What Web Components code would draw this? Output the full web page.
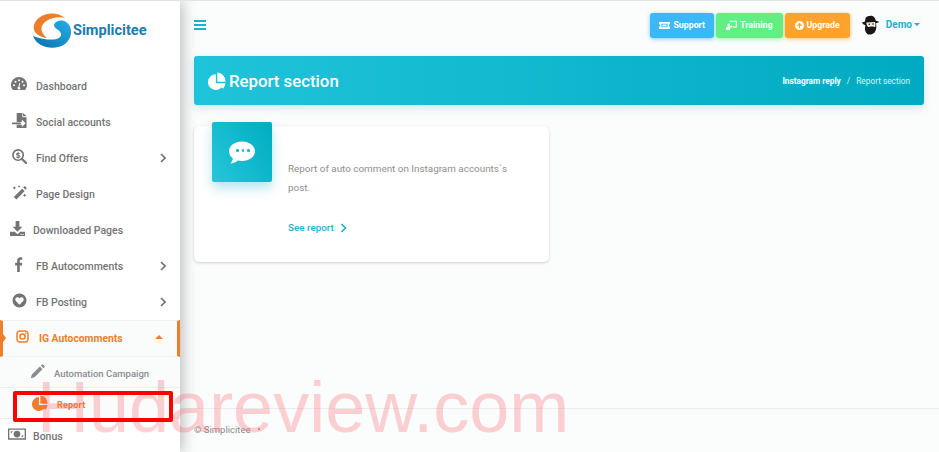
<!DOCTYPE html>
<html lang="en">
<head>
<meta charset="utf-8">
<title>Report section</title>
<style>
  html, body { margin: 0; height: 100%; }
  body {
    width: 939px;
    height: 452px;
    overflow: hidden;
    position: relative;
    display: flex;
    font-family: Roboto, "Liberation Sans", sans-serif;
    background: #fbfcfc;
    border-top: 1px solid #e2e2e2;
    box-sizing: border-box;
  }
</style>
</head>
<body>
<app-sidebar>
  <nav-item icon="gauge" size="16" style="--pad:11px;--gap:9px">Dashboard</nav-item>
  <nav-item icon="signin" size="15" style="--pad:12px;--gap:9px">Social accounts</nav-item>
  <nav-item icon="search" size="15" arrow="right" style="--pad:12px;--gap:9px">Find Offers</nav-item>
  <nav-item icon="wand" size="15" style="--pad:12px;--gap:9px">Page Design</nav-item>
  <nav-item icon="download" size="15" style="--pad:10px;--gap:8px">Downloaded Pages</nav-item>
  <nav-item icon="facebook" size="15" arrow="right" style="--pad:12px;--gap:9px">FB Autocomments</nav-item>
  <nav-item icon="heart" size="15" arrow="right" style="--pad:12px;--gap:9px">FB Posting</nav-item>
  <nav-item icon="instagram" size="13" arrow="up" active style="--pad:13px;--gap:10px">IG Autocomments</nav-item>
  <nav-item icon="pencil" size="15" sub style="--pad:30px;--gap:9px">Automation Campaign</nav-item>
  <nav-item icon="pie" size="16" sub current style="--pad:32px;--gap:9px">Report</nav-item>
  <nav-item icon="money" size="18" bottom style="--pad:8px;--gap:7px">Bonus</nav-item>
</app-sidebar>
<main-panel>
  <top-bar slot="top"></top-bar>
  <page-header slot="top" crumb="Instagram reply" current="Report section">Report section</page-header>
  <report-card link="See report">Report of auto comment on Instagram accounts`s post.</report-card>
  <page-footer slot="foot">© Simplicitee</page-footer>
</main-panel>
<mark-box></mark-box>
<water-mark>Hudareview.com</water-mark>

<script>
const ICONS = {
  gauge: '<path fill="currentColor" d="M8 1a8 8 0 0 0-8 8c0 1.700.5 3.300 1.500 4.600.2.300.5.400.8.400h11.400c.3 0 .6-.1.8-.4A8 8 0 0 0 16 9a8 8 0 0 0-8-8zm0 2.200a1 1 0 1 1 0 2 1 1 0 0 1 0-2zM3 10.300a1 1 0 1 1 0-2 1 1 0 0 1 0 2zm1.500-3.500a1 1 0 1 1 0-2 1 1 0 0 1 0 2zm5 5.700a1.600 1.600 0 0 1-3 0c-.2-.7.2-1.400.9-1.600l1-4 .9.200-.9 4c.5.200.9.700 1.100 1.400zM11.500 6.800a1 1 0 1 1 0-2 1 1 0 0 1 0 2zm1.500 3.500a1 1 0 1 1 0-2 1 1 0 0 1 0 2z"/>',
  signin: '<path fill="currentColor" d="M5 0h6v4.500h4.500V16H5v-3.500h5.500V15l4-4-4-4v2.500H5zM11.800 0 15.500 3.500h-3.700zM0 10h9.500v2H0z"/>',
  search: '<path fill="none" stroke="currentColor" stroke-width="1.800" d="M6.500 1a5.500 5.500 0 1 0 0 11 5.500 5.500 0 0 0 0-11z"/><path fill="none" stroke="currentColor" stroke-width="2.400" stroke-linecap="round" d="m10.700 10.700 4.300 4.300"/><path fill="none" stroke="currentColor" stroke-width="1.100" d="M8.300 5a2 1.300 0 0 0-3.600.500c0 1.700 3.800.8 3.800 2.500A2 1.300 0 0 1 4.600 8.300M6.500 3v7"/>',
  wand: '<path fill="currentColor" d="m10.800 4 2.700 2.500-8.800 9-2.800-2.700zM12 2.700l1-1a1 1 0 0 1 1.300 0l1 1a1 1 0 0 1 0 1.400l-1 1zM2.500 1l.6 1.400 1.400.6-1.400.6-.6 1.400-.6-1.400L.5 3l1.400-.6zM7.500 0l.5 1 1 .5-1 .5-.5 1L7 2l-1-.5 1-.5zM13.500 9l.6 1.400 1.400.6-1.400.6-.6 1.400-.6-1.400-1.400-.6 1.400-.6z"/>',
  download: '<path fill="currentColor" d="M6 0h4v6h3.200L8 11.500 2.800 6H6zM0 11.500h5L8 14l3-2.500h5V16H0zm12.300 2.200a.7.7 0 1 0 0 1.100.7.7 0 0 0 0-1.100zm2 0a.7.7 0 1 0 0 1.100.7.7 0 0 0 0-1.100z"/>',
  facebook: '<path fill="currentColor" d="M5.500 16V9H3.300V6h2.200V4c0-2.400 1.300-3.700 3.400-3.700 1 0 1.700.1 2 .1V3H9.600C8.500 3 8.300 3.600 8.300 4.400V6h2.600l-.4 3H8.300v7z"/>',
  heart: '<path fill="currentColor" fill-rule="evenodd" d="M8 .5a7.500 7.500 0 1 0 0 15 7.500 7.500 0 0 0 0-15zM8 12.500 4.100 8.500C2.800 7 3.500 4.600 5.500 4.500c1-.1 1.900.4 2.500 1.300.6-.9 1.500-1.400 2.500-1.300 2 .1 2.700 2.500 1.400 4z"/>',
  instagram: '<rect x="1.200" y="1.200" width="13.600" height="13.600" rx="3.600" fill="none" stroke="currentColor" stroke-width="1.800"/><circle cx="8" cy="8" r="3.200" fill="none" stroke="currentColor" stroke-width="1.800"/><circle cx="12" cy="4" r=".9" fill="currentColor"/>',
  pencil: '<path fill="currentColor" d="M10.500 2.700 13.300 5.500 4.800 14 .8 15.200 2 11.200zM11.500 1.700l1.100-1a1.200 1.200 0 0 1 1.600 0l1.100 1.100a1.200 1.200 0 0 1 0 1.600l-1 1.100z"/>',
  pie: '<path fill="currentColor" d="M7 2a7 7 0 1 0 6.900 8H7zM8.300.5v8.200h7.200A7.600 7.600 0 0 0 8.300.5zM8.500 10l4.800 4.800A7 7 0 0 0 15.500 10z"/>',
  money: '<path fill="currentColor" fill-rule="evenodd" d="M0 3h16v10H0zm1.200 1.200v7.600h13.600V4.200zM8 5a3 3 0 1 1 0 6 3 3 0 0 1 0-6zM2.500 5.500h2l-2 2zm9 5h2v-2z"/>',
  chat: '<path fill="currentColor" d="M8 1.500c4.400 0 8 2.600 8 6s-3.600 6-8 6c-.9 0-1.800-.1-2.600-.3C4.300 14.200 2.700 15 .8 15c.7-.7 1.500-1.900 1.600-3C.9 10.800 0 9.200 0 7.500c0-3.400 3.600-6 8-6z"/>',
  ticket: '<path fill="currentColor" fill-rule="evenodd" d="M0 3h16v3.200a1.800 1.800 0 0 0 0 3.600V13H0V9.800a1.800 1.800 0 0 0 0-3.600zm3.500 2.500v5h9v-5z"/><rect x="5" y="6.700" width="6" height="2.600" fill="currentColor"/>',
  teach: '<path fill="none" stroke="currentColor" stroke-width="1.500" d="M6 3V1.800h9v8.400H9.500"/><circle cx="4" cy="7" r="2" fill="currentColor"/><path fill="currentColor" d="M0 14.500v-2c0-1.700 1.400-3 3-3h2.500L8.500 8l1 1-3.500 2.500v3z"/>',
  up: '<path fill="currentColor" fill-rule="evenodd" d="M8 0a8 8 0 1 0 0 16A8 8 0 0 0 8 0zm0 3 4.500 5-1.400 1.300-2-2.100V13H6.900V7.200l-2 2.100L3.500 8z"/>'
};

function svg(name, size) {
  return `<svg width="${size}" height="${size}" viewBox="0 0 16 16" aria-hidden="true">${ICONS[name]}</svg>`;
}

class AppSidebar extends HTMLElement {
  constructor() {
    super();
    this.attachShadow({ mode: "open" });
    this.shadowRoot.innerHTML = `
      <style>
        :host {
          display: block;
          flex: 0 0 180px;
          width: 180px;
          background: #fff;
          box-shadow: 2px 0 14px rgba(0, 0, 0, 0.28);
          position: relative;
          z-index: 2;
          overflow: hidden;
        }
        .brand {
          height: 67px;
          box-sizing: border-box;
          display: flex;
          align-items: center;
          padding: 0 0 8px 33px;
          color: #1a7dab;
          font-size: 14.600px;
          font-weight: 700;
        }
        .brand span { position: relative; top: -1px; margin-left: -1px; }
        svg { display: block; }
      </style>
      <div class="brand">
        <svg width="41" height="40" viewBox="33 10 41 40" aria-hidden="true">
          <defs>
            <linearGradient id="b" x1="0" y1="1" x2="1" y2="0">
              <stop offset="0" stop-color="#0b6fa8"/><stop offset="1" stop-color="#27aee6"/>
            </linearGradient>
          </defs>
          <path fill="#ec7d2a" d="M65 17C55 9 38 12 34 24c-2 8 6 12 13 13-5-4-8-10-3-15 5-5 14-7 21-5z"/>
          <path fill="url(#b)" d="M33 35c4 12 22 15 32 8 8-6 8-18 1-22-4-3-11-1-12 3 0 4 6 4 7 9 1 6-11 8-28 2z"/>
        </svg>
        <span>Simplicitee</span>
      </div>
      <slot></slot>
    `;
  }
}

class NavItem extends HTMLElement {
  constructor() {
    super();
    this.attachShadow({ mode: "open" });
  }

  connectedCallback() {
    const arrow = this.getAttribute("arrow");
    let arrowMark = "";
    if (arrow === "right") {
      arrowMark = `<svg class="arrow" width="6" height="10" viewBox="0 0 6 10"><path d="m1 1 4 4-4 4" fill="none" stroke="#6f6f6f" stroke-width="1.600"/></svg>`;
    } else if (arrow === "up") {
      arrowMark = `<span class="caret"></span>`;
    }
    this.shadowRoot.innerHTML = `
      <style>
        :host {
          display: flex;
          align-items: center;
          height: 36px;
          box-sizing: border-box;
          padding-left: var(--pad, 12px);
          padding-right: 14px;
          gap: var(--gap, 7px);
          color: #747475;
          font-size: 10.500px;
          font-weight: 500;
          position: relative;
        }
        :host([active]) {
          height: 37px;
          color: #ee7e2c;
          background: #fafbfb;
          border-left: 3px solid #ee7e2c;
          border-right: 3px solid #ee7e2c;
          border-top: 1px solid #f0f2f2;
          border-bottom: 1px solid #f0f2f2;
          font-weight: 700;
          font-size: 10.300px;
        }
        :host([active])::before {
          content: "";
          position: absolute;
          left: 0;
          top: 13px;
          border-left: 3px solid #ee7e2c;
          border-top: 4px solid transparent;
          border-bottom: 4px solid transparent;
        }
        :host([sub]) {
          height: 31px;
          padding-top: 3px;
          background: #fafbfb;
          font-size: 9.500px;
          border-bottom: 1px solid #eef0f0;
          color: #8b8d90;
        }
        :host([current]) {
          color: #ee7e2c;
          font-weight: 700;
          font-size: 9px;
          letter-spacing: 0.2px;
        }
        :host([bottom]) { height: 34px; }
        .icon { display: flex; flex: none; position: relative; top: -2px; }
        .label { flex: 1; white-space: nowrap; }
        .arrow { flex: none; }
        .caret {
          border-left: 4px solid transparent;
          border-right: 4px solid transparent;
          border-bottom: 4px solid currentColor;
          margin-top: -4px;
        }
      </style>
      <span class="icon">${svg(this.getAttribute("icon"), this.getAttribute("size") || 15)}</span>
      <span class="label"><slot></slot></span>
      ${arrowMark}
    `;
  }
}

class MainPanel extends HTMLElement {
  constructor() {
    super();
    this.attachShadow({ mode: "open" });
    this.shadowRoot.innerHTML = `
      <style>
        :host {
          display: flex;
          flex-direction: column;
          flex: 1;
          min-width: 0;
          height: 451px;
        }
        .content { flex: 1; padding: 21px 14px 0; }
        .foot { flex: none; }
      </style>
      <slot name="top"></slot>
      <div class="content"><slot></slot></div>
      <div class="foot"><slot name="foot"></slot></div>
    `;
  }
}

class TopBar extends HTMLElement {
  constructor() {
    super();
    this.attachShadow({ mode: "open" });
    this.shadowRoot.innerHTML = `
      <style>
        :host {
          display: flex;
          align-items: center;
          height: 48px;
          padding: 0 19px 0 14px;
          margin-bottom: 7px;
        }
        .burger { width: 12px; display: grid; gap: 2px; color: #1cb1c9; }
        .burger i { display: block; height: 2px; background: currentColor; }
        .tools { margin-left: auto; display: flex; align-items: center; gap: 2px; }
        .user {
          display: flex; align-items: center; margin-left: 10px;
          color: #1eb0c8; font-size: 10px; font-weight: 700; gap: 6px;
        }
        .user span { position: relative; top: -1px; }
        .user i {
          border-left: 3px solid transparent;
          border-right: 3px solid transparent;
          border-top: 3px solid currentColor;
          margin: -2px 0 0 -4px;
        }
      </style>
      <div class="burger"><i></i><i></i><i></i></div>
      <div class="tools">
        <tool-button icon="ticket" size="11" color="#3ab8f8" style="--left:9px;--right:9px">Support</tool-button>
        <tool-button icon="teach" size="11" color="#62ee82" style="--left:10px;--right:10px">Training</tool-button>
        <tool-button icon="up" size="9" color="#ffa32c" style="--left:10px;--right:10px">Upgrade</tool-button>
        <div class="user">
          <svg width="18" height="21" viewBox="0 0 18 21" aria-hidden="true">
            <path fill="#171717" d="M3.500 3C5 .8 9 .2 11 1.200c1.500.8 2.300 2.300 2.700 4.300L17.500 7 14 8.300c.5 3 .8 6.500-1.500 9.200-1.800 2-5.500 2.800-7.500 1.200C2.800 17 2.500 13 3.500 10.500L1 9l-1-1.500 3-1z"/>
            <path fill="#f3ead9" d="M4.300 7.600 13 6.900c.6 1.200.7 3 .4 4.500-.8.800-1.700.5-2.300.2-.8-.3-1.600-.2-2.200 0-.9.400-1.800.6-2.700.3-1-.5-1.700-2.300-1.900-4.300z"/>
            <circle cx="7.300" cy="9.200" r=".8" fill="#171717"/><circle cx="11" cy="9" r=".8" fill="#171717"/>
          </svg>
          <span>Demo</span><i></i>
        </div>
      </div>
    `;
  }
}

class ToolButton extends HTMLElement {
  constructor() {
    super();
    this.attachShadow({ mode: "open" });
  }

  connectedCallback() {
    const color = this.getAttribute("color");
    this.shadowRoot.innerHTML = `
      <style>
        :host {
          display: flex;
          align-items: center;
          gap: 3px;
          height: 25px;
          padding: 0 var(--right, 10px) 0 var(--left, 9px);
          box-sizing: border-box;
          border-radius: 3px;
          background: ${color};
          box-shadow: 0 1px 4px ${color}aa;
          color: #fff;
          font-size: 8.800px;
          font-weight: 700;
          white-space: nowrap;
        }
        svg { display: block; }
      </style>
      ${svg(this.getAttribute("icon"), this.getAttribute("size"))}<slot></slot>
    `;
  }
}

class PageHeader extends HTMLElement {
  constructor() {
    super();
    this.attachShadow({ mode: "open" });
  }

  connectedCallback() {
    this.shadowRoot.innerHTML = `
      <style>
        :host {
          display: flex;
          align-items: center;
          justify-content: space-between;
          height: 49px;
          margin: 0 15px 0 14px;
          padding: 0 14px;
          border-radius: 3px;
          background: linear-gradient(90deg, #20c4da, #00aac1);
          box-shadow: 0 3px 8px rgba(0, 172, 193, 0.2);
          color: #fff;
        }
        h1 {
          margin: 0;
          display: flex;
          align-items: center;
          gap: 3px;
          font-size: 16.800px;
          font-weight: 500;
        }
        ol {
          display: flex;
          gap: 6px;
          list-style: none;
          margin: 0;
          padding: 0;
          font-size: 8.300px;
          color: #dff5f8;
        }
        ol b { font-weight: 700; color: #fff; }
      </style>
      <h1>${svg("pie", 18)}<slot></slot></h1>
      <ol><li><b>${this.getAttribute("crumb")}</b></li><li>/</li><li>${this.getAttribute("current")}</li></ol>
    `;
  }
}

class ReportCard extends HTMLElement {
  constructor() {
    super();
    this.attachShadow({ mode: "open" });
  }

  connectedCallback() {
    this.shadowRoot.innerHTML = `
      <style>
        :host {
          display: block;
          position: relative;
          width: 355px;
          height: 136px;
          box-sizing: border-box;
          background: #fff;
          border-radius: 5px;
          box-shadow: 0 1px 3px rgba(0, 0, 0, 0.18);
          padding: 33px 36px 0 94px;
        }
        .badge {
          position: absolute;
          left: 18px;
          top: -4px;
          width: 60px;
          height: 60px;
          display: flex;
          align-items: center;
          justify-content: center;
          color: #fff;
          border-radius: 2px;
          background: linear-gradient(60deg, #26c6da, #00acc1);
          box-shadow: 0 6px 12px rgba(0, 172, 193, 0.3);
        }
        .dots { position: absolute; display: flex; gap: 3px; left: 24px; top: 27px; }
        .dots i { width: 2.500px; height: 2.500px; border-radius: 50%; background: #14b8cf; }
        p {
          margin: 0;
          color: #8f8f8f;
          font-size: 9.900px;
          line-height: 19px;
        }
        a {
          display: inline-flex;
          align-items: center;
          gap: 6px;
          margin-top: 25px;
          color: #1eb3ca;
          font-size: 9.900px;
          font-weight: 500;
        }
      </style>
      <div class="badge">${svg("chat", 26)}<span class="dots"><i></i><i></i><i></i></span></div>
      <p><slot></slot></p>
      <a>${this.getAttribute("link")}
        <svg width="7" height="10" viewBox="0 0 7 10"><path d="m1.500 1 4 4-4 4" fill="none" stroke="#1eb3ca" stroke-width="1.700"/></svg>
      </a>
    `;
  }
}

class PageFooter extends HTMLElement {
  constructor() {
    super();
    this.attachShadow({ mode: "open" });
    this.shadowRoot.innerHTML = `
      <style>
        :host {
          display: flex;
          align-items: center;
          gap: 7px;
          height: 44px;
          box-sizing: border-box;
          padding: 0 14px 3px;
          border-top: 1px solid #e9eded;
          color: #8b8b8b;
          font-size: 9.500px;
        }
        i { width: 2px; height: 2px; border-radius: 50%; background: #8b8b8b; }
      </style>
      <slot></slot><i></i>
    `;
  }
}

class MarkBox extends HTMLElement {
  constructor() {
    super();
    this.attachShadow({ mode: "open" });
    this.shadowRoot.innerHTML = `
      <style>
        :host {
          position: absolute;
          left: 13px;
          top: 390px;
          width: 160px;
          height: 31px;
          box-sizing: border-box;
          border: 4px solid #f00;
          border-radius: 2px;
          z-index: 5;
        }
      </style>
    `;
  }
}

class WaterMark extends HTMLElement {
  constructor() {
    super();
    this.attachShadow({ mode: "open" });
    this.shadowRoot.innerHTML = `
      <style>
        :host {
          position: absolute;
          left: 37px;
          top: 365px;
          z-index: 4;
          color: rgba(250, 90, 100, 0.28);
          font-family: "Liberation Sans", Arial, sans-serif;
          font-size: 72px;
          line-height: 82px;
          white-space: nowrap;
          pointer-events: none;
        }
      </style>
      <slot></slot>
    `;
  }
}

customElements.define("app-sidebar", AppSidebar);
customElements.define("nav-item", NavItem);
customElements.define("main-panel", MainPanel);
customElements.define("top-bar", TopBar);
customElements.define("tool-button", ToolButton);
customElements.define("page-header", PageHeader);
customElements.define("report-card", ReportCard);
customElements.define("page-footer", PageFooter);
customElements.define("mark-box", MarkBox);
customElements.define("water-mark", WaterMark);
</script>
</body>
</html>
